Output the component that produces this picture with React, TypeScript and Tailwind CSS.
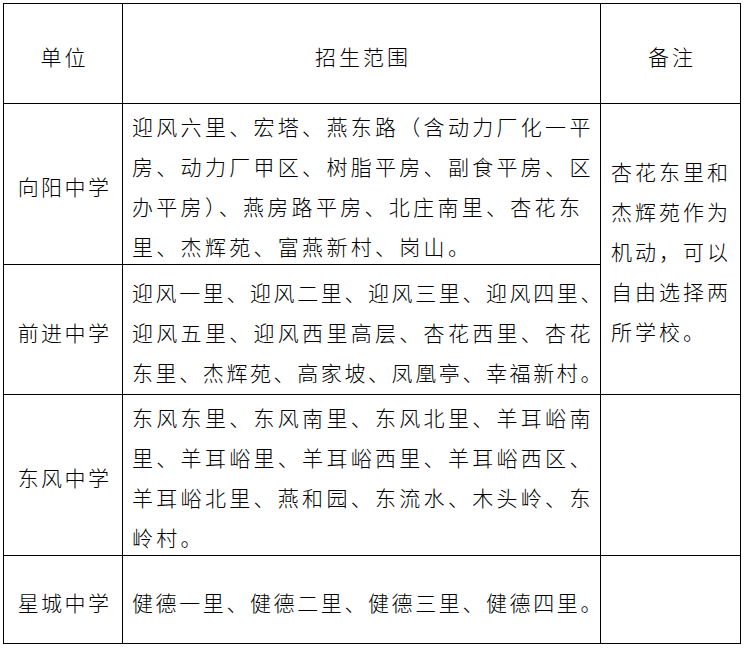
const ROWS: { name: string; lines: string[] }[] = [
  {
    name: "向阳中学",
    lines: [
      "迎风六里、宏塔、燕东路（含动力厂化一平",
      "房、动力厂甲区、树脂平房、副食平房、区",
      "办平房）、燕房路平房、北庄南里、杏花东",
      "里、杰辉苑、富燕新村、岗山。",
    ],
  },
  {
    name: "前进中学",
    lines: [
      "迎风一里、迎风二里、迎风三里、迎风四里、",
      "迎风五里、迎风西里高层、杏花西里、杏花",
      "东里、杰辉苑、高家坡、凤凰亭、幸福新村。",
    ],
  },
  {
    name: "东风中学",
    lines: [
      "东风东里、东风南里、东风北里、羊耳峪南",
      "里、羊耳峪里、羊耳峪西里、羊耳峪西区、",
      "羊耳峪北里、燕和园、东流水、木头岭、东",
      "岭村。",
    ],
  },
  {
    name: "星城中学",
    lines: ["健德一里、健德二里、健德三里、健德四里。"],
  },
];

const NOTE = ["杏花东里和", "杰辉苑作为", "机动，可以", "自由选择两", "所学校。"];

// every cell draws its own right and bottom rule; the table draws left and top
const cell = "flex items-center border-r border-b border-black pt-[4px]";

export default function App() {
  return (
    <div
      className="h-[648px] w-[745px] bg-white pl-[3px] pt-[3px] text-[21px] font-light text-black"
      style={{ fontFamily: '"Noto Sans CJK SC", "Noto Sans", sans-serif' }}
    >
      <div className="grid w-[738px] grid-cols-[119px_478px_140px] grid-rows-[100px_161px_130px_161px_88px] border-l border-t border-black leading-[40px]">
        <div className={`${cell} justify-center pl-[3px] tracking-[3px]`}>单位</div>
        <div className={`${cell} justify-center pl-[3px] tracking-[3px]`}>招生范围</div>
        <div className={`${cell} justify-center pl-[3px] tracking-[3px]`}>备注</div>

        {ROWS.map((row, i) => (
          <div key={row.name} className="contents">
            <div className={`${cell} justify-center pl-[3px] tracking-[2.4px]`}>{row.name}</div>
            <div className={`${cell} pl-[9px]`}>
              <div className="flex flex-col">
                {row.lines.map((line) => (
                  <div
                    key={line}
                    className={`whitespace-nowrap ${line.length >= 20 ? "tracking-[2.6px]" : "tracking-[3.3px]"}`}
                  >
                    {line}
                  </div>
                ))}
              </div>
            </div>
            {i === 0 && (
              <div className={`${cell} row-span-2 pl-[10px] tracking-[3px]`}>
                <div className="flex flex-col">
                  {NOTE.map((l) => (
                    <div key={l} className="whitespace-nowrap">
                      {l}
                    </div>
                  ))}
                </div>
              </div>
            )}
            {i >= 2 && <div className={cell} />}
          </div>
        ))}
      </div>
    </div>
  );
}
